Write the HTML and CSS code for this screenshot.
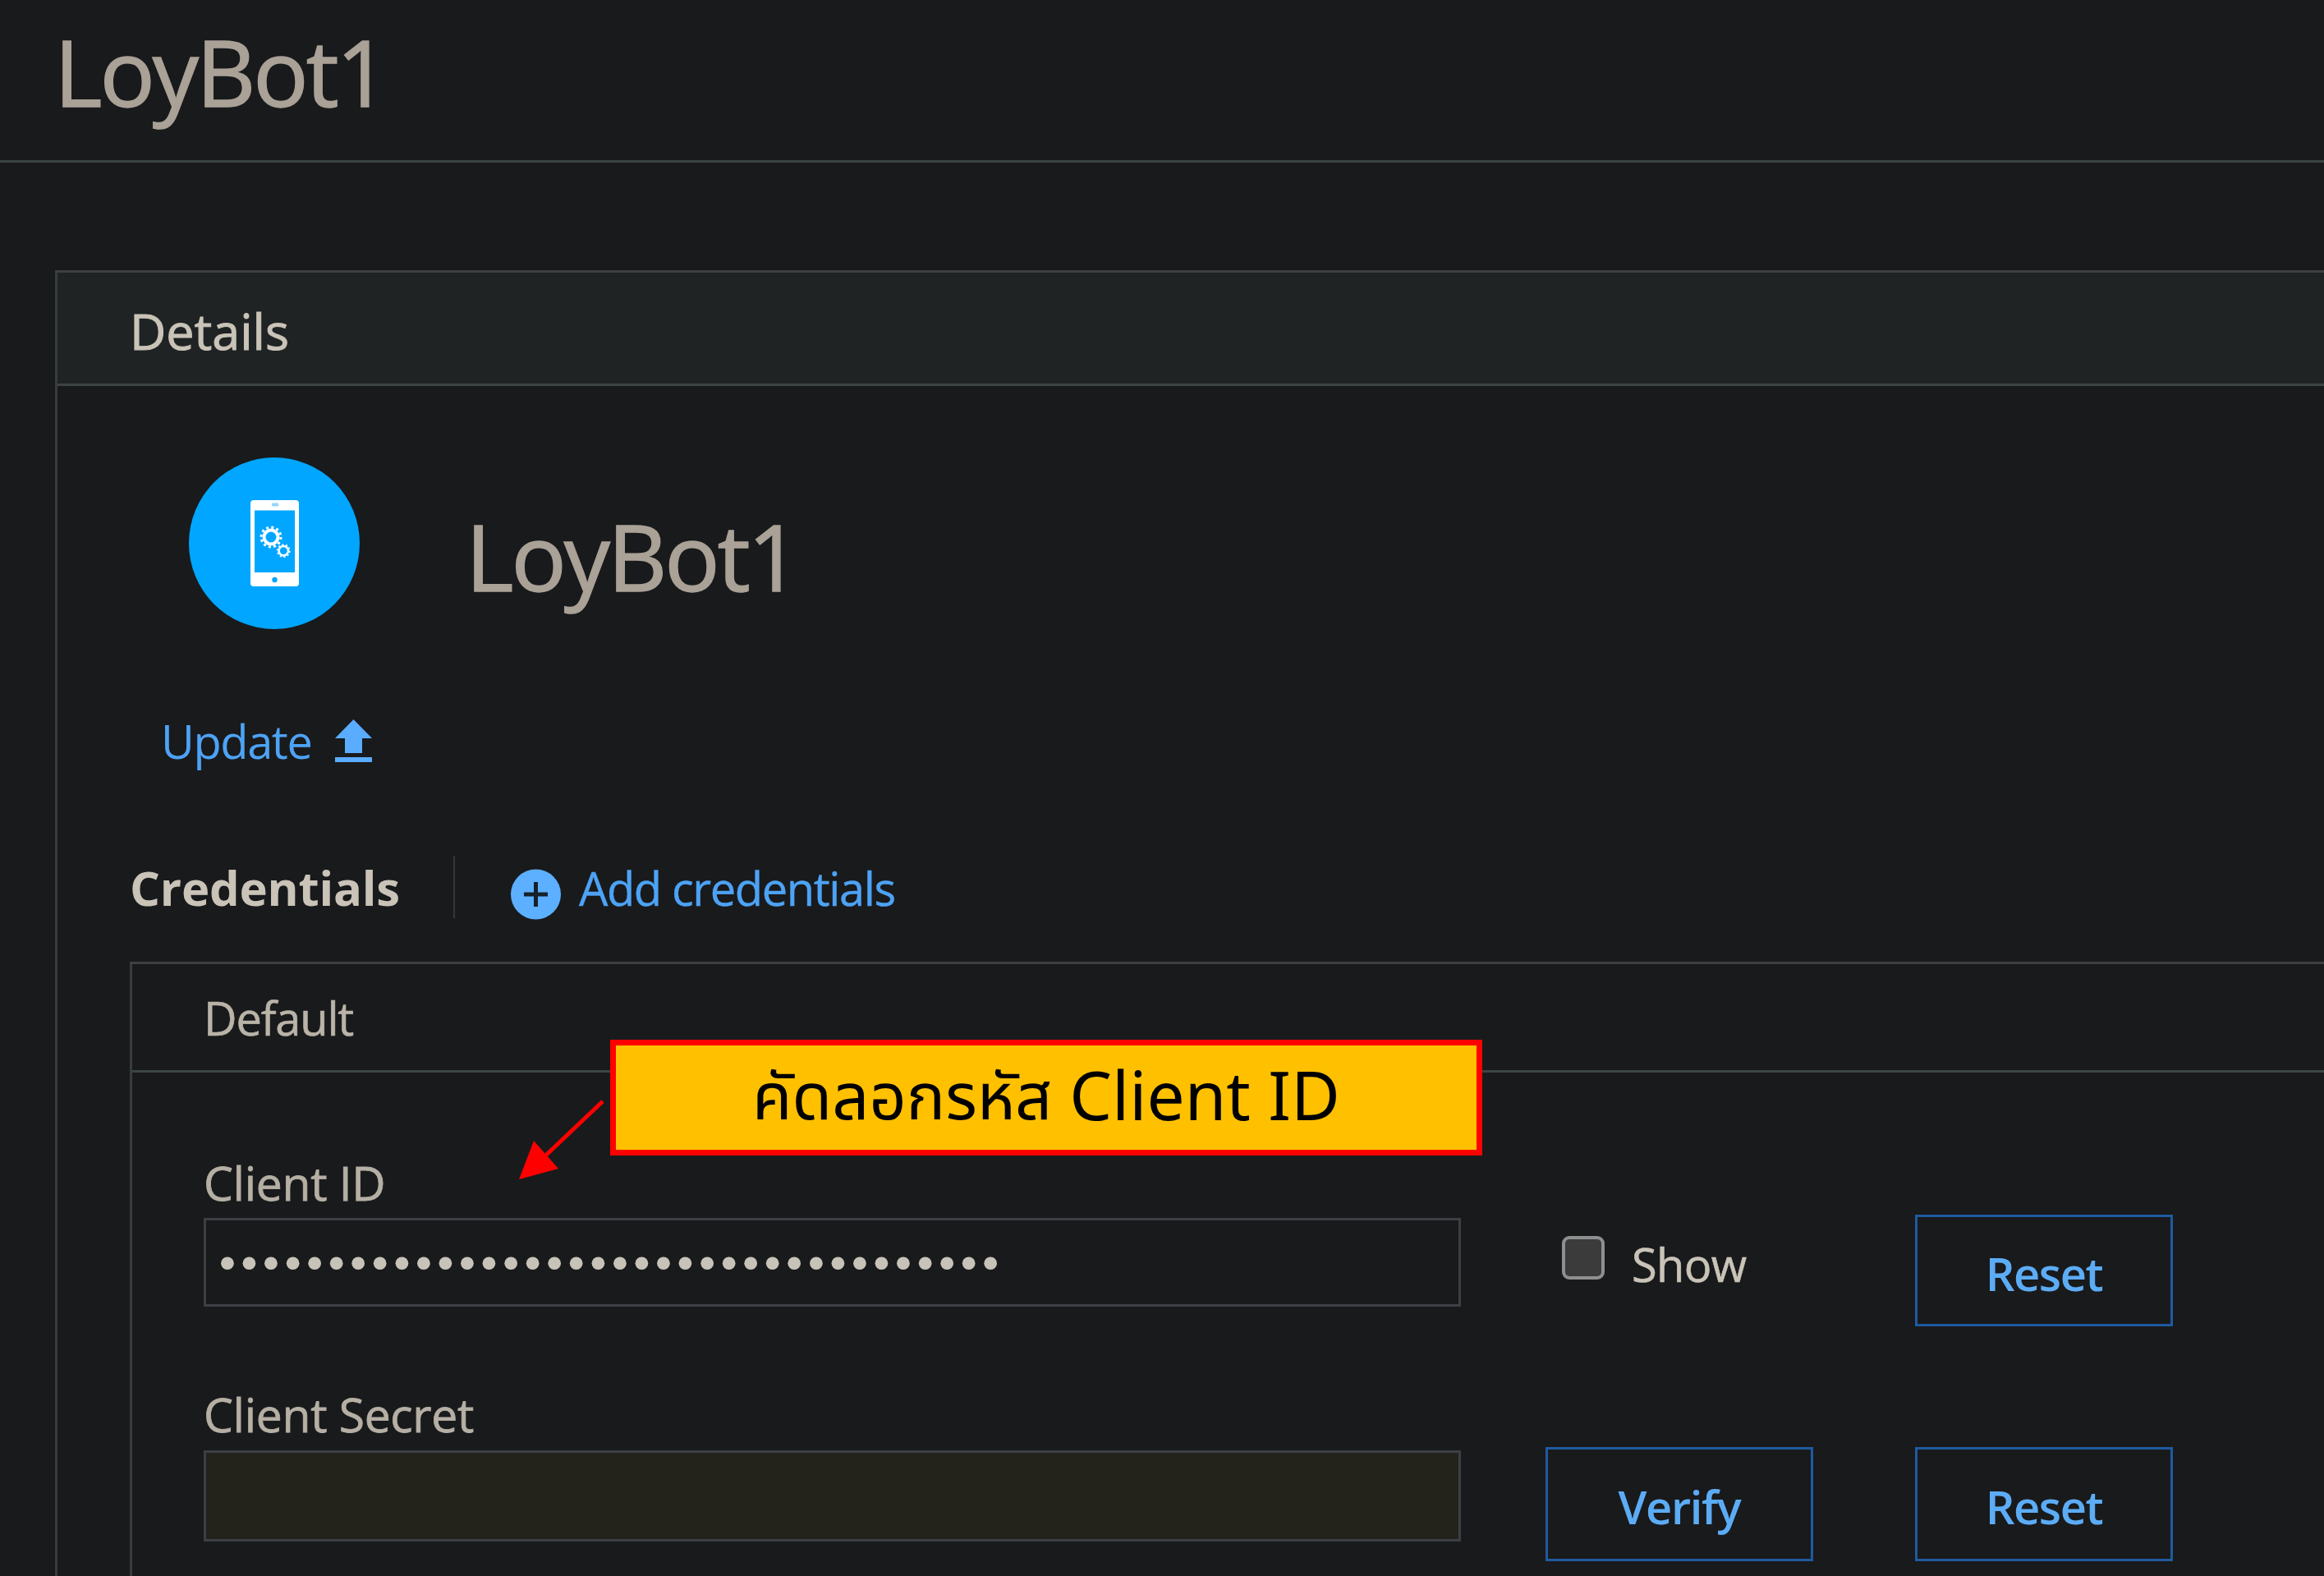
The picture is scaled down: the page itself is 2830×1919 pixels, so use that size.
FILE: index.html
```html
<!DOCTYPE html>
<html lang="en">
<head>
<meta charset="utf-8">
<title>LoyBot1</title>
<link rel="stylesheet" href="styles.css">
</head>
<body>
<div class="page">
  <header class="top"><h1 class="title">LoyBot1</h1></header>
  <section class="panel">
    <div class="panel-head">Details</div>
    <div class="panel-body">
      <div class="identity">
        <div class="avatar">
          <svg class="phone" viewBox="0 0 59 105" width="59" height="105">
            <rect width="59" height="105" rx="4" fill="#fff"/>
            <rect x="5" y="12.5" width="49" height="75.500" fill="#00a6ff"/>
            <rect x="26" y="3.500" width="8" height="4" rx="1" fill="#8fd6ff"/>
            <circle cx="29.500" cy="97" r="3.200" fill="#00a6ff"/>
            <circle cx="25" cy="45" r="8.500" fill="none" stroke="#fff" stroke-width="4"/>
            <circle cx="25" cy="45" r="12" fill="none" stroke="#fff" stroke-width="3" stroke-dasharray="3 3.280"/>
            <circle cx="40.300" cy="61.700" r="5.700" fill="none" stroke="#fff" stroke-width="2.500"/>
            <circle cx="40.300" cy="61.700" r="7.600" fill="none" stroke="#fff" stroke-width="1.500" stroke-dasharray="2.400 2.375"/>
          </svg>
        </div>
        <div class="app-name">LoyBot1</div>
      </div>
      <a class="update">Update
        <svg class="upload" viewBox="0 0 45 52" width="45" height="52">
          <path d="M22.500 0 45 23H33V41H12V23H0Z M0 46H45V52H0Z" fill="#5aacff"/>
        </svg>
      </a>
      <div class="cred-row">
        <strong class="cred-title">Credentials</strong>
        <span class="cred-divider"></span>
        <svg class="plus" viewBox="0 0 61 62" width="61" height="62">
          <circle cx="30.500" cy="31" r="30.500" fill="#5cb0ff"/>
          <path d="M30.500 16V46M16 31H45" stroke="#16202a" stroke-width="5" fill="none"/>
        </svg>
        <a class="add-link">Add credentials</a>
      </div>
      <div class="cred-box">
        <div class="box-head">Default</div>
        <div class="box-body">
          <div class="form-row first">
            <div class="field">
              <label class="field-label">Client ID</label>
              <div class="field-input id-input"><span class="dots">••••••••••••••••••••••••••••••••••••</span></div>
            </div>
            <div class="action-col">
              <label class="show"><input class="check" type="checkbox"><span class="show-text">Show</span></label>
            </div>
            <button class="btn reset-btn">Reset</button>
          </div>
          <div class="form-row second">
            <div class="field">
              <label class="field-label">Client Secret</label>
              <div class="field-input secret-input"></div>
            </div>
            <div class="action-col">
              <button class="btn verify-btn">Verify</button>
            </div>
            <button class="btn reset-btn">Reset</button>
          </div>
        </div>
      </div>
    </div>
  </section>
  <div class="callout"><span class="callout-thai">คัดลอกรหัส</span><span class="callout-latin">Client ID</span></div>
  <svg class="pointer" viewBox="0 0 115 110" width="115" height="110">
    <path d="M109 6 32 79" stroke="#ff0000" stroke-width="5" fill="none"/>
    <path d="M7 101 25 54 55 88Z" fill="#ff0000"/>
  </svg>
</div>
</body>
</html>
```
FILE: styles.css
```css
* { box-sizing: border-box; }
html, body { margin: 0; padding: 0; background: #191a1c; }
body { font-family: "Open Sans", "Noto Sans", sans-serif; color: #c9c3b8; }
.page { position: relative; display: flex; flex-direction: column; width: 2830px; height: 1919px; overflow: hidden; background: #191a1c; }

.top { flex: none; height: 198px; border-bottom: 3px solid #3c4444; padding-left: 66px; display: flex; align-items: center; }
.title, .app-name { margin: 0; font-size: 112px; line-height: 150px; font-weight: 500; color: #aaa197; letter-spacing: -3px; -webkit-text-stroke: 1.5px #aaa197; }
.title { margin-bottom: 22px; }

.panel { flex: 1; display: flex; flex-direction: column; margin: 131px 0 0 67px; border-left: 3px solid #383c3e; border-top: 3px solid #3c4042; }
.panel-head { flex: none; height: 138px; background: #1f2324; border-bottom: 3px solid #3c4444; padding: 6px 0 0 88px; display: flex; align-items: center; font-size: 61px; font-weight: 500; color: #c9c3b8; -webkit-text-stroke: 1px #c9c3b8; }
.panel-body { flex: 1; display: flex; flex-direction: column; padding: 87px 0 0 88px; }

.identity { display: flex; align-items: flex-start; padding-left: 72px; gap: 129px; }
.avatar { width: 208px; height: 209px; border-radius: 50%; background: #00a6ff; display: flex; align-items: center; justify-content: center; }
.phone { display: block; }
.app-name { padding-top: 45px; }

.update { display: flex; align-items: center; height: 76px; margin: 98px 0 0 38px; font-size: 56px; color: #4da3f5; gap: 29px; letter-spacing: -1.4px; }
.upload { display: block; }

.cred-row { display: flex; align-items: center; height: 76px; margin-top: 102px; }
.cred-title { font-size: 58px; font-weight: 700; color: #c9c3b8; width: 394px; letter-spacing: -0.2px; }
.cred-divider { width: 2px; height: 76px; background: #34383a; margin-right: 68px; }
.plus { display: block; margin: 18px 22px 0 0; }
.add-link { font-size: 56px; color: #4da3f5; letter-spacing: -1.4px; padding-top: 2px; -webkit-text-stroke: 0.4px #4da3f5; }

.cred-box { flex: 1; margin-top: 53px; border-left: 3px solid #383c3e; border-top: 3px solid #3c4042; }
.box-head { height: 132px; border-bottom: 3px solid #3c4444; padding-left: 87px; display: flex; align-items: center; font-size: 56px; color: #b9b3a8; letter-spacing: -1.2px; -webkit-text-stroke: 0.6px #b9b3a8; }
.box-body { padding: 104px 0 0 87px; }

.form-row { display: flex; align-items: flex-start; }
.form-row.second { margin-top: 77px; }
.field { width: 1531px; margin-right: 103px; }
.field-label { display: block; height: 60px; line-height: 60px; font-size: 57px; font-weight: 500; color: #b5afa4; letter-spacing: -0.3px; -webkit-text-stroke: 0.8px #b5afa4; }
.field-input { border: 3px solid #3c4044; margin-top: 13px; }
.id-input { height: 108px; display: flex; align-items: center; padding: 6px 0 0 10px; }
.secret-input { height: 111px; margin-top: 14px; background: #23221b; }
.dots { font-family: "DejaVu Sans", sans-serif; font-size: 54px; line-height: 40px; color: #c8c3b8; letter-spacing: -5.300px; }

.action-col { width: 326px; margin-right: 124px; }
.show { display: flex; align-items: flex-start; padding: 95px 0 0 20px; gap: 33px; }
.check { appearance: none; margin: 0; width: 52px; height: 53px; border: 4px solid #8f8f8f; border-radius: 9px; background: #3b3b3b; }
.show-text { height: 60px; line-height: 60px; margin-top: 4px; font-size: 56px; color: #c9c3b8; letter-spacing: -0.7px; -webkit-text-stroke: 0.6px #c9c3b8; }

.btn { display: block; padding: 6px 0 0; background: transparent; border: 3px solid #1f5aa0; font-family: inherit; font-size: 56px; font-weight: 600; color: #5cacf5; letter-spacing: -1.400px; }
.reset-btn { width: 314px; height: 136px; margin-top: 69px; }
.verify-btn { width: 326px; height: 139px; margin-top: 70px; padding-top: 4px; }
.second .reset-btn { height: 139px; margin-top: 70px; padding-top: 4px; }

.callout { position: absolute; left: 743px; top: 1266px; width: 1062px; height: 141px; padding-top: 4px; border: 7px solid #ff0000; background: #ffc000; color: #000; font-family: "Noto Sans Thai", "Noto Sans", "DejaVu Sans", sans-serif; display: flex; align-items: center; justify-content: center; gap: 21px; }
.callout-thai { font-size: 79px; }
.callout-latin { font-size: 82px; font-weight: 400; }
.pointer { position: absolute; left: 625px; top: 1335px; }
```
